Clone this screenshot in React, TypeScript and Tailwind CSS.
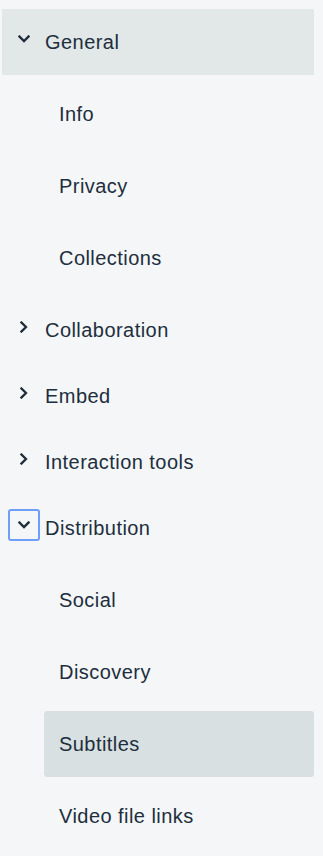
import React from "react";

const font = { fontFamily: '"Liberation Sans", Arial, sans-serif' };

function Down() {
  return (
    <svg width="12" height="8" viewBox="0 0 12 8" fill="none">
      <polyline points="1.5,1.5 6,6 10.5,1.5" stroke="#1f2d3b" strokeWidth="2.3" strokeLinecap="square" />
    </svg>
  );
}
function Right() {
  return (
    <svg width="8" height="12" viewBox="0 0 8 12" fill="none">
      <polyline points="1.5,1.5 6,6 1.5,10.5" stroke="#1f2d3b" strokeWidth="2.3" strokeLinecap="square" />
    </svg>
  );
}

function Header({ label, open, active, focused }: { label: string; open?: boolean; active?: boolean; focused?: boolean }) {
  return (
    <div className={`h-[66px] flex items-center pl-[6px] ${active ? "bg-[#e2e7e8]" : ""}`}>
      <div
        className={`w-8 h-8 mb-[6px] flex items-center justify-center rounded-[3px] ${focused ? "border-2 border-[#6f9ef6]" : ""}`}
      >
        {open ? <Down /> : <Right />}
      </div>
      <span className="ml-[5px] text-[20px] tracking-[0.45px] text-[#202e3d]">{label}</span>
    </div>
  );
}

function Sub({ items, active }: { items: string[]; active?: string }) {
  return (
    <div className="flex flex-col gap-[6px] py-[6px] pl-[42px]">
      {items.map((it) => (
        <div
          key={it}
          className={`h-[66px] flex items-center pl-[15px] rounded-[3px] text-[20px] tracking-[0.45px] text-[#202e3d] ${it === active ? "bg-[#d9e0e1]" : ""}`}
        >
          {it}
        </div>
      ))}
    </div>
  );
}

export default function App() {
  return (
    <div className="min-h-[856px] bg-[#f5f6f8] pt-[9px] pl-[2px] pr-[9px]" style={font}>
      <Header label="General" open active />
      <Sub items={["Info", "Privacy", "Collections"]} />
      <Header label="Collaboration" />
      <Header label="Embed" />
      <Header label="Interaction tools" />
      <Header label="Distribution" open focused />
      <Sub items={["Social", "Discovery", "Subtitles", "Video file links"]} active="Subtitles" />
    </div>
  );
}
